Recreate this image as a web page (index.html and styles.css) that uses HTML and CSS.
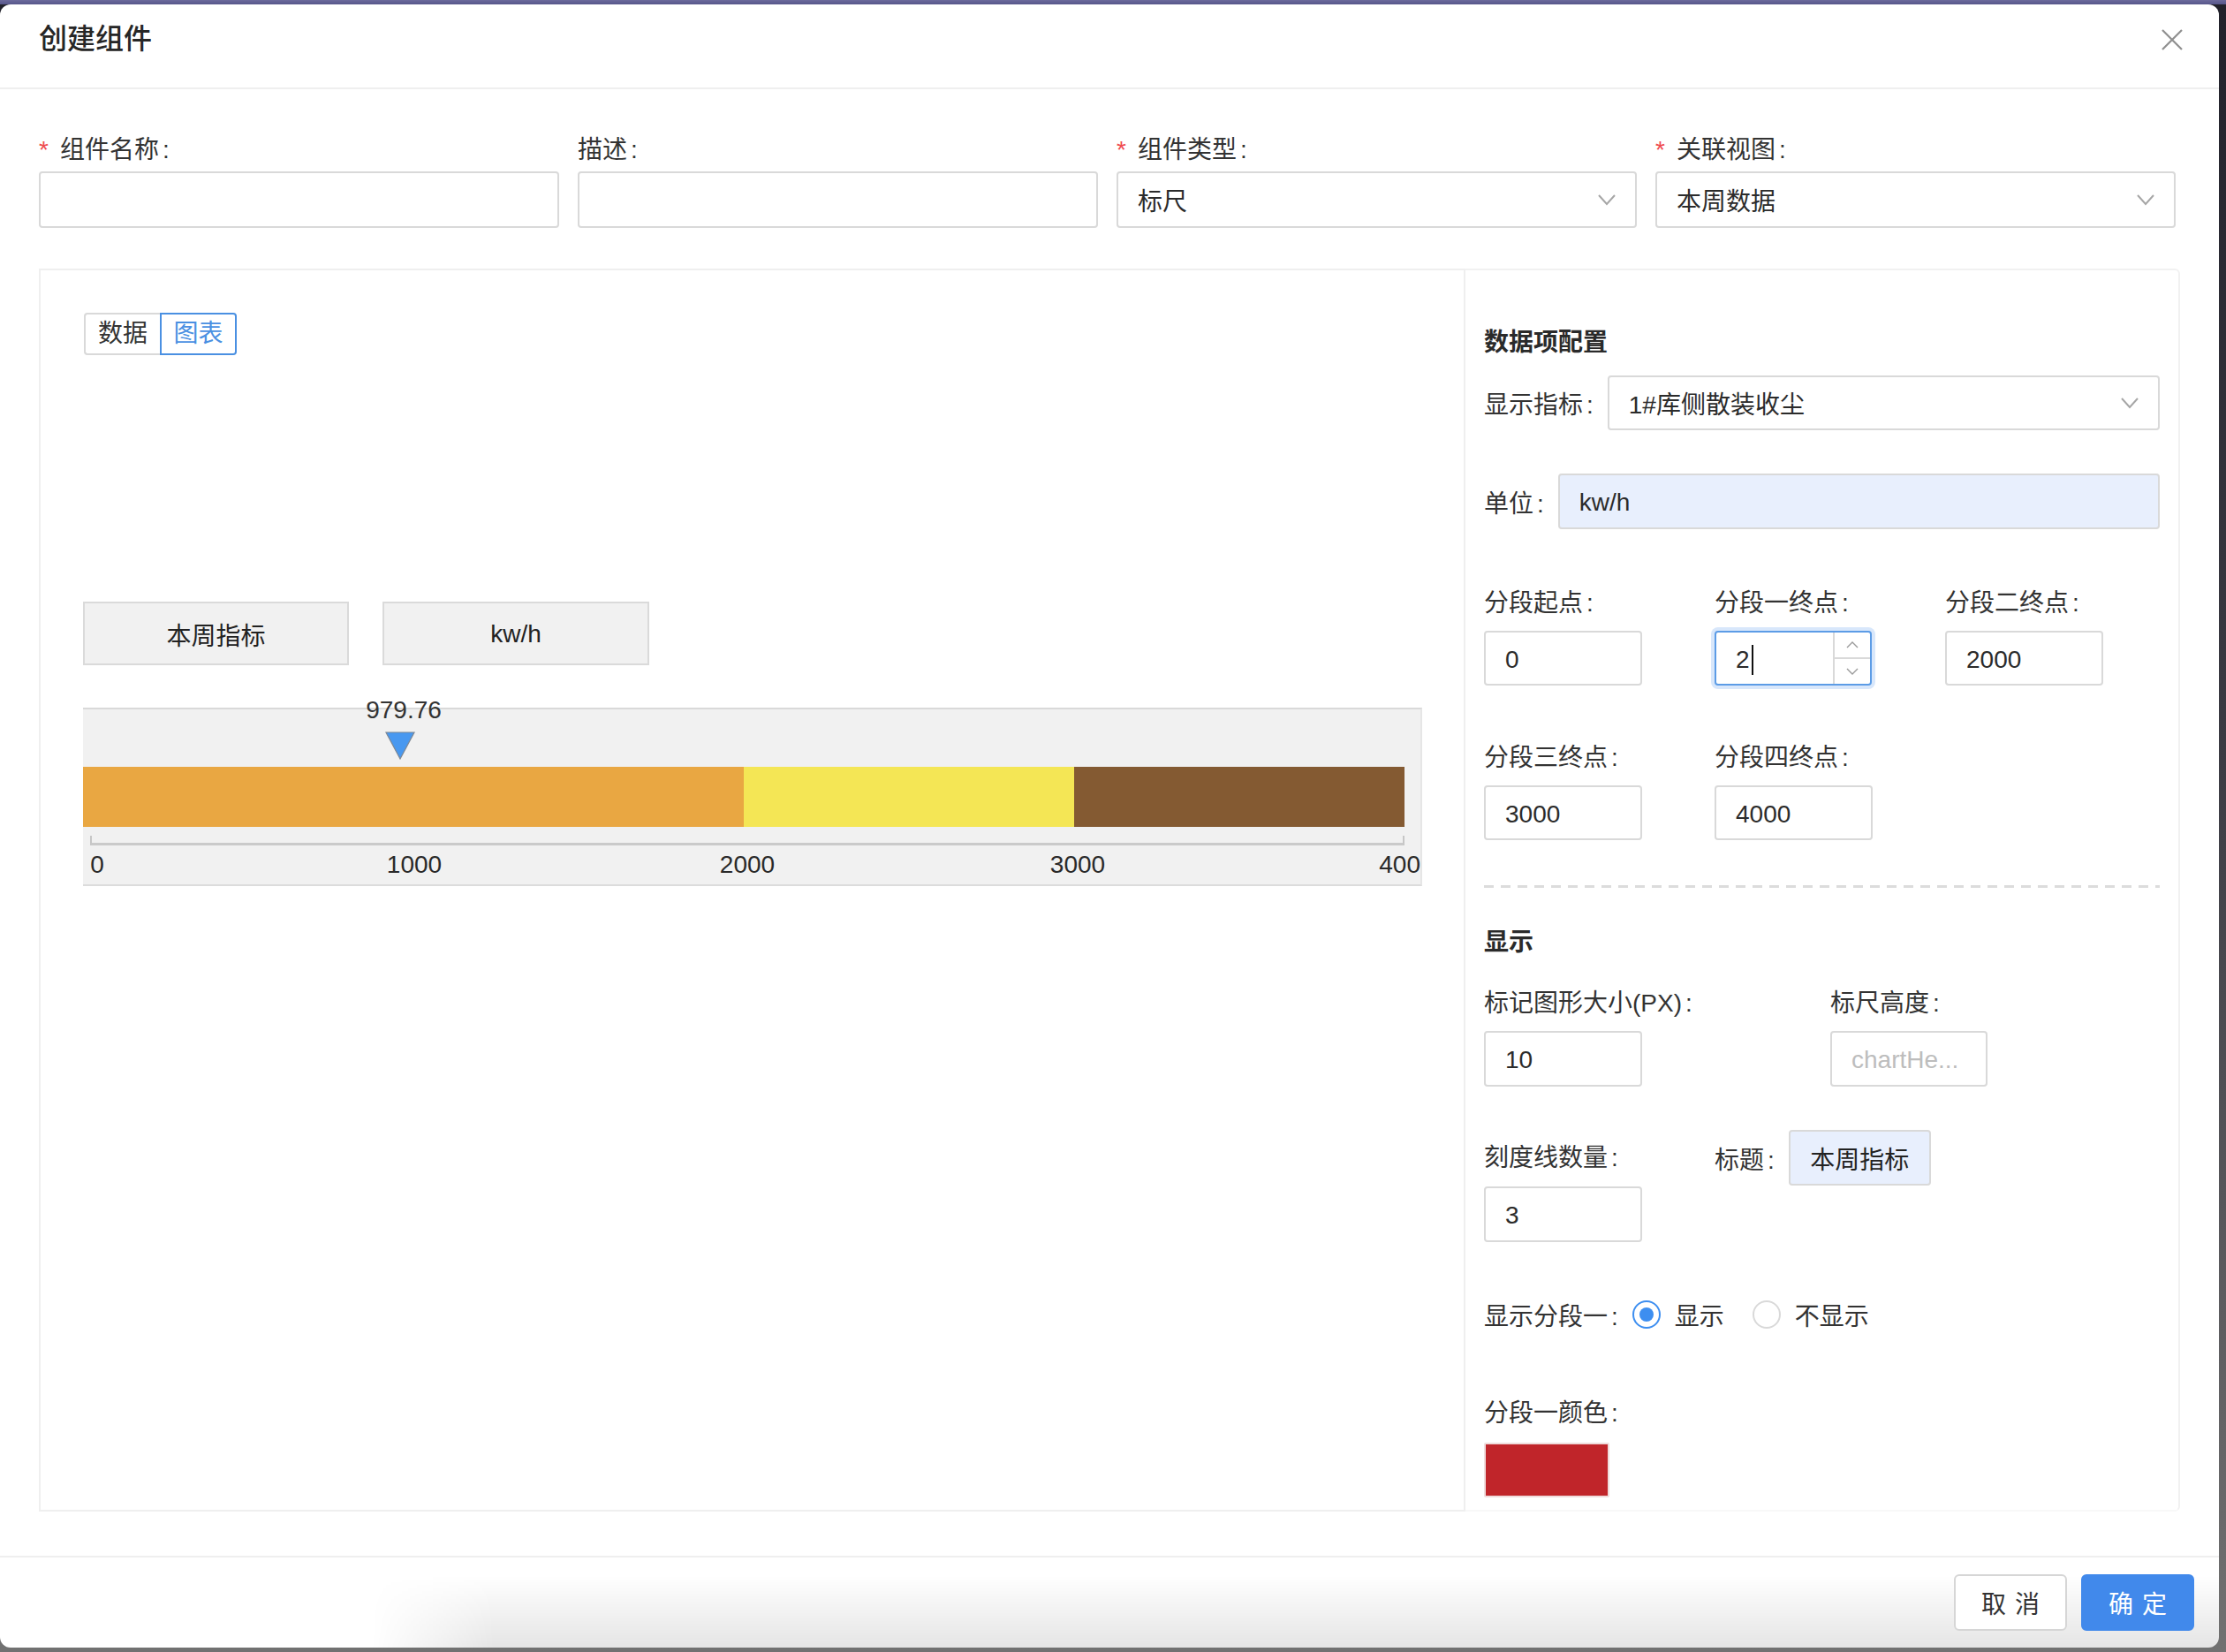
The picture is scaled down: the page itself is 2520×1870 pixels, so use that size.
FILE: index.html
```html
<!DOCTYPE html>
<html lang="zh-CN">
<head>
<meta charset="utf-8">
<title>创建组件</title>
<link rel="stylesheet" href="styles.css">
</head>
<body>
<div class="modal">
  <div class="modal-header">
    <div class="modal-title">创建组件</div>
    <svg class="close-icon" width="24" height="24" viewBox="0 0 24 24"><path d="M1 1L23 23M23 1L1 23"/></svg>
  </div>

  <div class="modal-body">
    <div class="form-grid">
      <div class="form-item">
        <div class="form-label"><span class="req">*</span>组件名称<span class="colon">:</span></div>
        <div class="input"></div>
      </div>
      <div class="form-item">
        <div class="form-label">描述<span class="colon">:</span></div>
        <div class="input"></div>
      </div>
      <div class="form-item">
        <div class="form-label"><span class="req">*</span>组件类型<span class="colon">:</span></div>
        <div class="input select"><span>标尺</span><svg class="chev" viewBox="0 0 20 14"><path d="M1 2L10 12L19 2"/></svg></div>
      </div>
      <div class="form-item">
        <div class="form-label"><span class="req">*</span>关联视图<span class="colon">:</span></div>
        <div class="input select"><span>本周数据</span><svg class="chev" viewBox="0 0 20 14"><path d="M1 2L10 12L19 2"/></svg></div>
      </div>
    </div>

    <div class="panel">
      <div class="preview">
        <div class="tabs">
          <div class="tab">数据</div>
          <div class="tab active">图表</div>
        </div>
        <div class="chart-titles">
          <div class="chart-title">本周指标</div>
          <div class="chart-title">kw/h</div>
        </div>
        <div class="ruler">
          <div class="marker-value" style="left:363px">979.76</div>
          <svg class="marker" style="left:342px" width="34" height="32" viewBox="0 0 34 32"><polygon points="1,1 33,1 17,31"/></svg>
          <div class="bar">
            <div class="seg seg-a" style="width:748px"></div>
            <div class="seg seg-b" style="width:374px"></div>
            <div class="seg seg-c" style="width:374px"></div>
          </div>
          <div class="axis"></div>
          <div class="axis-labels">
            <span class="tick" style="left:16px">0</span>
            <span class="tick" style="left:375px">1000</span>
            <span class="tick" style="left:752px">2000</span>
            <span class="tick" style="left:1126px">3000</span>
            <span class="tick tick-end">400</span>
          </div>
        </div>
      </div>

      <div class="config">
        <div class="section-title sec-data">数据项配置</div>

        <div class="hrow row-metric">
          <div class="hlabel">显示指标<span class="colon">:</span></div>
          <div class="input select grow"><span>1#库侧散装收尘</span><svg class="chev" viewBox="0 0 20 14"><path d="M1 2L10 12L19 2"/></svg></div>
        </div>

        <div class="hrow row-unit">
          <div class="hlabel">单位<span class="colon">:</span></div>
          <div class="input grow filled">kw/h</div>
        </div>

        <div class="vrow row-seg1">
          <div class="vitem w261">
            <div class="vlabel">分段起点<span class="colon">:</span></div>
            <div class="input small">0</div>
          </div>
          <div class="vitem w261">
            <div class="vlabel">分段一终点<span class="colon">:</span></div>
            <div class="input small number focused">
              <div class="num-val">2<span class="caret"></span></div>
              <div class="handler">
                <div class="h-btn"><svg width="14" height="8" viewBox="0 0 14 8"><path d="M1 7L7 1L13 7"/></svg></div>
                <div class="h-btn h-down"><svg width="14" height="8" viewBox="0 0 14 8"><path d="M1 1L7 7L13 1"/></svg></div>
              </div>
            </div>
          </div>
          <div class="vitem">
            <div class="vlabel">分段二终点<span class="colon">:</span></div>
            <div class="input small">2000</div>
          </div>
        </div>

        <div class="vrow row-seg2">
          <div class="vitem w261">
            <div class="vlabel">分段三终点<span class="colon">:</span></div>
            <div class="input small">3000</div>
          </div>
          <div class="vitem">
            <div class="vlabel">分段四终点<span class="colon">:</span></div>
            <div class="input small">4000</div>
          </div>
        </div>

        <div class="dashed"></div>

        <div class="section-title sec-show">显示</div>

        <div class="vrow row-show">
          <div class="vitem w392">
            <div class="vlabel">标记图形大小(PX)<span class="colon">:</span></div>
            <div class="input small tall">10</div>
          </div>
          <div class="vitem">
            <div class="vlabel">标尺高度<span class="colon">:</span></div>
            <div class="input small tall placeholder">chartHe...</div>
          </div>
        </div>

        <div class="vrow row-scale">
          <div class="vitem w261">
            <div class="vlabel gap10">刻度线数量<span class="colon">:</span></div>
            <div class="input small tall">3</div>
          </div>
          <div class="hrow title-item">
            <div class="hlabel">标题<span class="colon">:</span></div>
            <div class="title-box">本周指标</div>
          </div>
        </div>

        <div class="radio-row">
          <div class="hlabel">显示分段一<span class="colon">:</span></div>
          <div class="radio-opt"><span class="radio checked"></span><span class="radio-text">显示</span></div>
          <div class="radio-opt"><span class="radio"></span><span class="radio-text">不显示</span></div>
        </div>

        <div class="vlabel color-label">分段一颜色<span class="colon">:</span></div>
        <div class="swatch"></div>
      </div>
    </div>
  </div>

  <div class="modal-footer">
    <button class="btn">取消</button>
    <button class="btn primary">确定</button>
  </div>
</div>
</body>
</html>
```

FILE: styles.css
```css
* { box-sizing: border-box; }
html, body { margin: 0; padding: 0; }
body {
  width: 2520px;
  height: 1870px;
  overflow: hidden;
  background: linear-gradient(to bottom, #6c6a9c 0, #57568a 5px, #22222b 5px, #3b3b43 45%, #717171 100%);
  font-family: "Liberation Sans", "Noto Sans CJK SC", sans-serif;
  font-size: 28px;
  color: #303030;
}

.modal {
  margin-top: 5px;
  width: 2512px;
  height: 1860px;
  background: #fff;
  border-radius: 12px;
  overflow: hidden;
  display: flex;
  flex-direction: column;
}

/* header */
.modal-header {
  flex: none;
  height: 96px;
  padding: 17px 41px 0 44px;
  border-bottom: 2px solid #efefef;
  display: flex;
  justify-content: space-between;
  align-items: flex-start;
}
.modal-title { font-size: 32px; line-height: 44px; font-weight: 500; color: #262626; }
.close-icon { margin-top: 11px; }
.close-icon path { stroke: #8f8f8f; stroke-width: 2.2; fill: none; }

/* body */
.modal-body { flex: none; padding: 47px 44px 50px; }
.form-grid { display: grid; grid-template-columns: repeat(4, 589px); column-gap: 21px; }
.form-label { height: 46px; line-height: 44px; white-space: nowrap; color: #333; }
.req { display: inline-block; width: 24px; color: #ef4a4f; }
.colon { margin-left: 4px; }

.input {
  height: 64px;
  border: 2px solid #d9d9d9;
  border-radius: 4px;
  background: #fff;
  padding: 0 22px;
  display: flex;
  align-items: center;
  color: #2b2b2b;
  white-space: nowrap;
}
.select { justify-content: space-between; }
.chev { flex: none; width: 20px; height: 14px; }
.chev path { fill: none; stroke: #a6a6a6; stroke-width: 2; }

/* panel */
.panel { margin-top: 46px; height: 1407px; display: flex; }
.preview {
  flex: none;
  width: 1615px;
  border: 2px solid #efefef;
  padding: 48px 0 0 48px;
}
.config {
  flex: 1;
  border: 2px solid #f1f1f1;
  border-left: none;
  border-bottom-color: #f8f8f8;
  border-radius: 0 6px 6px 0;
  padding: 0 21px;
  overflow: hidden;
}

/* preview */
.tabs { display: flex; margin-left: 1px; }
.tab {
  height: 48px;
  line-height: 44px;
  text-align: center;
  border: 2px solid #d9d9d9;
  color: #333;
}
.tab:first-child { width: 86px; border-right: none; border-radius: 4px 0 0 4px; }
.tab.active { width: 87px; border-color: #4a90e2; color: #4a90e2; border-radius: 0 4px 4px 0; }

.chart-titles { display: flex; gap: 38px; margin-top: 279px; }
.chart-title {
  width: 301px;
  height: 72px;
  background: #f1f1f1;
  border: 2px solid #dadada;
  display: flex;
  align-items: center;
  justify-content: center;
  color: #222;
  padding-top: 2px;
}
.chart-title + .chart-title { width: 302px; }

.ruler {
  position: relative;
  margin-top: 48px;
  width: 1516px;
  height: 202px;
  background: #f1f1f1;
  border-top: 2px solid #d9d9d9;
  border-bottom: 2px solid #dcdcdc;
  border-right: 2px solid #e6e6e6;
}
.marker-value {
  position: absolute;
  top: -15px;
  line-height: 32px;
  transform: translateX(-50%);
  color: #333;
}
.marker { position: absolute; top: 25px; }
.marker polygon { fill: #4898f0; stroke: #7d8794; stroke-width: 1.2; }
.bar { display: flex; margin-top: 65px; height: 68px; }
.seg { height: 68px; }
.seg-a { background: #e9a742; }
.seg-b { background: #f4e655; }
.seg-c { background: #845a32; }
.axis {
  position: absolute;
  left: 8px;
  top: 143px;
  width: 1488px;
  height: 11px;
  border-left: 2px solid #c6c6c6;
  border-right: 2px solid #c6c6c6;
  border-bottom: 3px solid #cacaca;
}
.axis-labels {
  position: absolute;
  left: 0;
  top: 160px;
  width: 1514px;
  height: 34px;
}
.tick {
  position: absolute;
  top: 0;
  line-height: 32px;
  transform: translateX(-50%);
  color: #2a2a2a;
}
.tick-end { left: auto; right: 0; transform: none; }

/* config */
.section-title { font-weight: 700; line-height: 44px; color: #2a2a2a; }
.sec-data { margin-top: 60px; }
.sec-show { margin-top: 40px; }

.hrow { display: flex; align-items: center; }
.hlabel { white-space: nowrap; margin-right: 16px; color: #333; }
.grow { flex: 1; }
.row-metric { margin-top: 15px; }
.row-metric .input { height: 62px; }
.row-unit { margin-top: 49px; }
.row-unit .input { height: 63px; padding-top: 3px; }
.filled { background: #e8effd; }

.vrow { display: flex; align-items: flex-start; }
.vitem { flex: none; }
.w261 { width: 261px; }
.w392 { width: 392px; }
.vlabel { line-height: 44px; height: 53px; white-space: nowrap; color: #333; }
.vlabel.gap10 { height: 54px; }
.input.small { width: 179px; height: 62px; padding-top: 3px; }
.input.small.tall { height: 63px; }
.placeholder { color: #bdbdbd; width: 178px !important; }

.row-seg1 { margin-top: 62px; }
.row-seg2 { margin-top: 60px; }
.row-show { margin-top: 25px; }
.row-scale { margin-top: 59px; }

.number { padding: 0 !important; width: 178px !important; align-items: stretch; }
.number.focused {
  border-color: #5c9ce6;
  box-shadow: 0 0 0 4px #d8e7fb;
}
.num-val { flex: 1; display: flex; align-items: center; padding: 3px 0 0 22px; }
.caret { display: inline-block; width: 2px; height: 34px; background: #111; margin-left: 2px; }
.handler {
  width: 42px;
  border-left: 2px solid #d9d9d9;
  display: flex;
  flex-direction: column;
}
.h-btn { flex: 1; display: flex; align-items: center; justify-content: center; }
.h-down { border-top: 2px solid #d9d9d9; }
.h-btn path { fill: none; stroke: #9a9a9a; stroke-width: 1.4; }

.dashed {
  margin-top: 51px;
  height: 3px;
  background: repeating-linear-gradient(to right, #dcdcdc 0, #dcdcdc 11px, transparent 11px, transparent 19px);
}

.title-item { margin-top: -10px; }
.title-box {
  width: 161px;
  height: 63px;
  background: #e8effd;
  border: 2px solid #d9d9d9;
  border-radius: 4px;
  display: flex;
  align-items: center;
  justify-content: center;
  color: #222;
}

.radio-row { margin-top: 60px; display: flex; align-items: center; height: 44px; }
.radio-opt { display: flex; align-items: center; margin-right: 16px; }
.radio {
  position: relative;
  width: 32px;
  height: 32px;
  border-radius: 50%;
  border: 2px solid #d9d9d9;
  background: #fff;
}
.radio.checked { border-color: #3d8ef0; }
.radio.checked::after {
  content: "";
  position: absolute;
  left: 6px;
  top: 6px;
  width: 16px;
  height: 16px;
  border-radius: 50%;
  background: #3d8ef0;
}
.radio-text { padding: 0 16px; color: #333; }

.color-label { margin-top: 68px; height: 55px; }
.swatch {
  width: 142px;
  height: 62px;
  background: #c0252a;
  border: 2px solid #efdcdc;
  border-radius: 2px;
}

/* footer */
.modal-footer {
  position: relative;
  flex: 1;
  border-top: 2px solid #efefef;
  padding: 19px 28px 0 0;
  display: flex;
  justify-content: flex-end;
  align-items: flex-start;
  gap: 16px;
}
.modal-footer::before {
  content: "";
  position: absolute;
  inset: 0;
  background: linear-gradient(to bottom, rgba(0,0,0,0) 20%, rgba(0,0,0,0.1) 100%);
  -webkit-mask-image: linear-gradient(to right, transparent 420px, #000 560px);
  mask-image: linear-gradient(to right, transparent 420px, #000 560px);
}
.btn {
  position: relative;
  width: 128px;
  height: 64px;
  border-radius: 6px;
  border: 2px solid #d6d6d6;
  background: #fff;
  font-family: inherit;
  font-size: 28px;
  color: #333;
  letter-spacing: 10px;
  text-indent: 10px;
  padding: 0;
  display: flex;
  align-items: center;
  justify-content: center;
}
.btn.primary { background: #4189eb; border-color: #4189eb; color: #fff; }
```
